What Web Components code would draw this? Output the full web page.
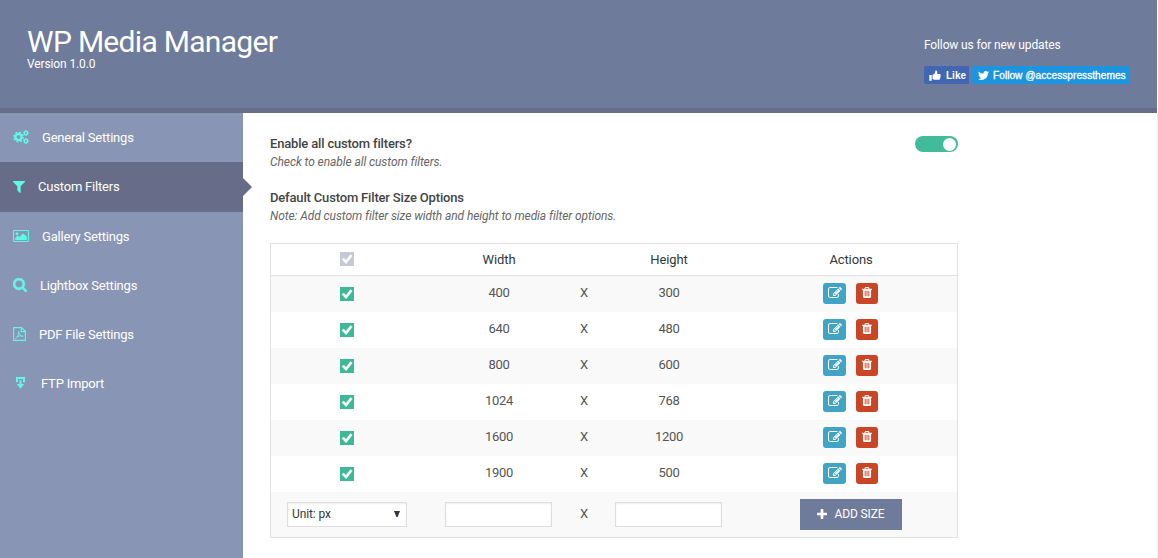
<!DOCTYPE html>
<html lang="en">
<head>
<meta charset="utf-8">
<title>WP Media Manager</title>
<style>
  body {
    margin: 0;
    background: #fff;
    font-family: Roboto, "Liberation Sans", sans-serif;
    font-size: 13px;
    color: #555;
    overflow: hidden;
  }
</style>
</head>
<body>
<media-manager></media-manager>

<script>
const ICONS = {
  gears: { box: '0 0 16 14', body: `
    <g fill="none" stroke="currentColor">
      <circle cx="5.5" cy="7" r="3.1" stroke-width="2.4"/>
      <circle cx="5.5" cy="7" r="4.7" stroke-width="1.5" stroke-dasharray="1.85 1.84"/>
      <circle cx="12.9" cy="3" r="1.7" stroke-width="1.5"/>
      <circle cx="12.9" cy="3" r="2.5" stroke-width="1" stroke-dasharray="1.3 1.31"/>
      <circle cx="12.9" cy="11" r="1.7" stroke-width="1.5"/>
      <circle cx="12.9" cy="11" r="2.5" stroke-width="1" stroke-dasharray="1.3 1.31"/>
    </g>` },
  filter: { box: '192 256 1408 1408', body: '<path d="M1595 295q17 41-14 70l-493 493v742q0 42-39 59-13 5-25 5-27 0-45-19l-256-256q-19-19-19-45v-486l-493-493q-31-29-14-70 17-39 59-39h1280q42 0 59 39z"/>' },
  image: { box: '0 0 16 12', body: `
    <rect x=".55" y=".55" width="14.9" height="10.9" rx=".6" fill="none" stroke="currentColor" stroke-width="1.1"/>
    <circle cx="4" cy="3.8" r="1.5"/>
    <path d="M2.2 9.9V8l2.5-2.4 1.5 1.5 3.9-3.9 3.7 3.5v3.2z"/>` },
  search: { box: '64 128 1664 1664', body: '<path stroke="currentColor" stroke-width="60" d="M1216 832q0-185-131.500-316.500t-316.500-131.500-316.500 131.500-131.500 316.500 131.500 316.500 316.500 131.500 316.500-131.500 131.500-316.500zm512 832q0 52-38 90t-90 38q-54 0-90-38l-343-342q-179 124-399 124-143 0-273.500-55.500t-225-150-150-225-55.500-273.500 55.500-273.500 150-225 225-150 273.500-55.500 273.500 55.500 225 150 150 225 55.500 273.500q0 220-124 399l343 343q37 37 37 90z"/>' },
  pdf: { box: '0 0 13 14', body: `
    <g fill="none" stroke="currentColor" stroke-width="1.1">
      <path d="M.6.6h8l3.8 3.7v9.1H.6zM8.3.6v4h4"/>
      <path d="M2.4 11.6c1.5-.7 3.3-3.600 3.600-6.600.1-1-.7-1-.6 0 .3 2.200 2 4 4.900 4.300M3.700 9.900c1.700-.8 3.900-1.200 6.600-.8" stroke-width=".9"/>
    </g>` },
  ftp: { box: '0 0 15 12', body: '<path d="M3 0h9v5.200h-2V2H5v3.200H3z"/><path d="M6.500 3.200h2v3.700h2.700L7.500 11.700 3.800 6.900h2.700z"/>' },
  edit: { box: '0 0 1792 1792', body: '<path d="M888 1184l116-116-152-152-116 116v56h96v96h56zm440-720q-16-16-33 1l-350 350q-17 17-1 33t33-1l350-350q17-17 1-33zm80 594v190q0 119-84.500 203.500t-203.500 84.500h-832q-119 0-203.500-84.500t-84.500-203.500v-832q0-119 84.500-203.500t203.500-84.500h832q63 0 117 25 15 7 18 23 3 17-9 29l-49 49q-14 14-32 8-23-6-45-6h-832q-66 0-113 47t-47 113v832q0 66 47 113t113 47h832q66 0 113-47t47-113v-126q0-13 9-22l64-64q15-15 35-7t20 29zm-96-738l288 288-672 672h-288v-288zm444 132l-92 92-288-288 92-92q28-28 68-28t68 28l152 152q28 28 28 68t-28 68z"/>' },
  trash: { box: '192 128 1408 1536', body: '<path d="M704 1376v-704q0-14-9-23t-23-9h-64q-14 0-23 9t-9 23v704q0 14 9 23t23 9h64q14 0 23-9t9-23zm256 0v-704q0-14-9-23t-23-9h-64q-14 0-23 9t-9 23v704q0 14 9 23t23 9h64q14 0 23-9t9-23zm256 0v-704q0-14-9-23t-23-9h-64q-14 0-23 9t-9 23v704q0 14 9 23t23 9h64q14 0 23-9t9-23zm-544-992h448l-48-117q-7-9-17-11h-317q-10 2-17 11zm928 32v64q0 14-9 23t-23 9h-96v948q0 83-47 143.500t-113 60.500h-832q-66 0-113-58.500t-47-141.500v-952h-96q-14 0-23-9t-9-23v-64q0-14 9-23t23-9h309l70-167q15-37 54-63t79-26h320q40 0 79 26t54 63l70 167h309q14 0 23 9t9 23z"/>' },
  plus: { box: '192 128 1408 1408', body: '<path d="M1600 736v192q0 40-28 68t-68 28h-416v416q0 40-28 68t-68 28h-192q-40 0-68-28t-28-68v-416h-416q-40 0-68-28t-28-68v-192q0-40 28-68t68-28h416v-416q0-40 28-68t68-28h192q40 0 68 28t28 68v416h416q40 0 68 28t28 68z"/>' },
  check: { box: '0 0 14 14', body: '<path d="M2.700 6.600 6 10 11.500 3.200" fill="none" stroke="currentColor" stroke-width="2.700"/>' },
  twitter: { box: '108 256 1576 1280', body: '<path d="M1684 408q-67 98-162 167 1 14 1 42 0 130-38 259.500t-115.500 248.500-184.500 210.500-258 146-323 54.500q-271 0-496-145 35 4 78 4 225 0 401-138-105-2-188-64.500t-114-159.500q33 5 61 5 43 0 85-11-112-23-185.500-111.500t-73.500-205.500v-4q68 38 146 41-66-44-105-115t-39-154q0-88 44-163 121 149 294.500 238.500t371.500 99.500q-8-38-8-74 0-134 94.500-228.500t228.500-94.500q140 0 236 102 109-21 205-78-37 115-142 178 93-10 186-50z"/>' },
  like: { box: '0 0 12 11', body: '<path d="M.3 5h2.400v5.700H.3zM3.500 5.200 6 3.100 6.500.5c1.500-.3 2.300.9 1.500 3.500h2.700c1 0 1.300 1 .7 1.500.5.500.4 1.200-.2 1.500.4.600.1 1.200-.4 1.400.3.700-.1 1.400-.9 1.400l-4.500-.1-1.900-.6z"/>' },
  arrow: { box: '0 0 6 6', body: '<path d="M0 0h6L3.600 6H2.400z"/>' }
};

class BaseElement extends HTMLElement {
  constructor() {
    super();
    this.attachShadow({ mode: 'open' });
  }

  connectedCallback() {
    this.shadowRoot.innerHTML = this.render();
  }
}

// <fa-icon name="edit" w="14" h="14">
class FaIcon extends BaseElement {
  render() {
    const icon = ICONS[this.getAttribute('name')];
    return `
      <style>
        :host { display: inline-block; flex: none; }
        svg { display: block; fill: currentColor; }
      </style>
      <svg width="${this.getAttribute('w')}" height="${this.getAttribute('h')}" viewBox="${icon.box}" aria-hidden="true">${icon.body}</svg>
    `;
  }
}

class ManagerHeader extends BaseElement {
  render() {
    return `
      <style>
        :host {
          display: flex;
          justify-content: space-between;
          align-items: flex-start;
          box-sizing: border-box;
          height: 113px;
          padding: 24px 27px 0;
          background: #6f7b9b;
          border-bottom: 5px solid #676d88;
          color: #fff;
        }
        h1 {
          margin: 0;
          font-size: 30px;
          font-weight: 400;
          line-height: 36px;
          letter-spacing: -.7px;
        }
        .version { font-size: 12px; line-height: 14px; margin-top: -3px; letter-spacing: -.12px; }
        .follow { padding-top: 14px; }
        .follow p { margin: 0 0 13px; font-size: 12px; line-height: 15px; letter-spacing: -.14px; }
        .social { display: flex; gap: 3px; font-family: "Liberation Sans", sans-serif; }
        .social a {
          display: flex;
          align-items: center;
          box-sizing: border-box;
          height: 18px;
          color: #fff;
          white-space: nowrap;
        }
        .fb { width: 45px; padding-left: 5px; gap: 5px; border-radius: 2px 0 0 2px; background: #4267b2; font-size: 10px; font-weight: 700; }
        .fb span { padding-top: 1px; }
        .tw {
          width: 158px;
          padding-left: 6px;
          gap: 4px;
          border-radius: 2px 0 0 2px;
          background: #1b95e0;
          font-size: 10.200px;
          -webkit-text-stroke: .3px #fff;
        }
      </style>
      <div>
        <h1>WP Media Manager</h1>
        <div class="version">Version 1.0.0</div>
      </div>
      <div class="follow">
        <p>Follow us for new updates</p>
        <div class="social">
          <a class="fb"><fa-icon name="like" w="12" h="11"></fa-icon><span>Like</span></a>
          <a class="tw"><fa-icon name="twitter" w="11" h="9"></fa-icon><span>Follow @accesspressthemes</span></a>
        </div>
      </div>
    `;
  }
}

class NavItem extends BaseElement {
  render() {
    return `
      <style>
        :host {
          display: flex;
          align-items: center;
          gap: 13px;
          box-sizing: border-box;
          height: 49px;
          padding-left: 13px;
          position: relative;
          color: #fff;
          line-height: 16px;
          letter-spacing: -.2px;
        }
        :host([active]) { height: 50px; background: #676d88; }
        :host([active])::after {
          content: "";
          position: absolute;
          left: 100%;
          top: 16px;
          border: 9px solid transparent;
          border-right-width: 0;
          border-left-color: #676d88;
        }
        fa-icon { color: #5ff9e6; margin-bottom: 1px; }
      </style>
      <fa-icon name="${this.getAttribute('icon')}" w="${this.getAttribute('w')}" h="${this.getAttribute('h')}"></fa-icon>
      <slot></slot>
    `;
  }
}

class ManagerNav extends BaseElement {
  render() {
    return `
      <style>
        :host { display: block; width: 243px; flex: none; background: #8995b5; }
      </style>
      <nav-item icon="gears" w="16" h="14">General Settings</nav-item>
      <nav-item icon="filter" w="12" h="12" active>Custom Filters</nav-item>
      <nav-item icon="image" w="16" h="12">Gallery Settings</nav-item>
      <nav-item icon="search" w="14" h="14">Lightbox Settings</nav-item>
      <nav-item icon="pdf" w="13" h="14">PDF File Settings</nav-item>
      <nav-item icon="ftp" w="15" h="12">FTP Import</nav-item>
    `;
  }
}

class ToggleSwitch extends BaseElement {
  render() {
    return `
      <style>
        :host {
          display: flex;
          justify-content: flex-end;
          align-items: center;
          box-sizing: border-box;
          width: 43px;
          height: 16px;
          padding-right: 2px;
          border-radius: 8px;
          background: #41bc9b;
        }
        i { width: 13px; height: 13px; border-radius: 50%; background: #fff; }
      </style>
      <i></i>
    `;
  }
}

class CheckBox extends BaseElement {
  render() {
    return `
      <style>
        :host { display: block; width: 14px; height: 14px; background: #3cb999; color: #fff; }
        :host([muted]) { background: #c5c9d7; }
      </style>
      <fa-icon name="check" w="14" h="14"></fa-icon>
    `;
  }
}

class OptionIntro extends BaseElement {
  render() {
    return `
      <style>
        :host { display: block; }
        h2 { margin: 0; font-size: 13px; line-height: 18px; font-weight: 500; letter-spacing: -.17px; color: #444; }
        p { margin: 0; font-size: 12px; line-height: 18px; font-style: italic; letter-spacing: -.085px; color: #666; }
      </style>
      <h2><slot name="title"></slot></h2>
      <p><slot></slot></p>
    `;
  }
}

class SizeTable extends BaseElement {
  get sizes() {
    return [[400, 300], [640, 480], [800, 600], [1024, 768], [1600, 1200], [1900, 500]];
  }

  renderRow([width, height]) {
    return `
      <div class="row">
        <check-box></check-box>
        <span>${width}</span>
        <span>X</span>
        <span>${height}</span>
        <div class="actions">
          <button class="edit" aria-label="Edit"><fa-icon name="edit" w="14" h="14"></fa-icon></button>
          <button class="delete" aria-label="Delete"><fa-icon name="trash" w="10" h="11"></fa-icon></button>
        </div>
      </div>
    `;
  }

  render() {
    return `
      <style>
        :host { display: block; box-sizing: border-box; width: 688px; border: 1px solid #e1e1e1; }
        .row {
          display: grid;
          grid-template-columns: 152px 152px 18px 152px 212px;
          align-items: center;
          justify-items: center;
          height: 36px;
        }
        .row:nth-child(even of .row) { background: #f9f9f9; }
        .row > span { line-height: 16px; padding-bottom: 2px; letter-spacing: -.3px; }
        .head { height: 31px; border-bottom: 1px solid #e1e1e1; color: #32373c; }
        .head > span { padding: 0; letter-spacing: -.12px; }
        .head check-box { margin-bottom: 1px; }
        .actions { display: flex; gap: 10px; margin: 0 1px 1px 0; }
        button { border: 0; font: inherit; color: #fff; display: flex; justify-content: center; }
        .edit, .delete { height: 21px; padding: 4px 0 0; border-radius: 3px; }
        .edit { width: 23px; background: #41a4c4; padding-top: 3px; }
        .delete { width: 22px; background: #c94526; }
        .foot { height: 45px; }
        .foot > span { padding-bottom: 1px; }
        .unit, input {
          box-sizing: border-box;
          height: 25px;
          border: 1px solid #ddd;
          border-radius: 0;
          background: #fff;
          box-shadow: inset 0 1px 2px rgba(0, 0, 0, .07);
        }
        input { width: 107px; margin: 0 1px 0 0; }
        .unit {
          display: flex;
          align-items: center;
          justify-content: space-between;
          width: 120px;
          padding: 0 6px 1px 4px;
          font-size: 12px;
          letter-spacing: -.1px;
          color: #32373c;
        }
        .add {
          width: 102px;
          height: 31px;
          padding: 0 0 1px;
          gap: 7px;
          align-items: center;
          background: #6f7b9b;
          font-size: 12px;
          letter-spacing: -.1px;
        }
      </style>
      <div class="row head">
        <check-box muted></check-box>
        <span>Width</span>
        <span></span>
        <span>Height</span>
        <span>Actions</span>
      </div>
      ${this.sizes.map((size) => this.renderRow(size)).join('')}
      <div class="row foot">
        <div class="unit"><span>Unit: px</span><fa-icon name="arrow" w="6" h="6"></fa-icon></div>
        <input type="text" aria-label="Width">
        <span>X</span>
        <input type="text" aria-label="Height">
        <button class="add"><fa-icon name="plus" w="10" h="10"></fa-icon><span>ADD SIZE</span></button>
      </div>
    `;
  }
}

class MediaManager extends BaseElement {
  render() {
    return `
      <style>
        :host { display: flex; flex-direction: column; width: 1157px; height: 558px; }
        .body { display: flex; flex: 1; border-right: 1px solid #eee; margin-right: -1px; }
        main { width: 688px; padding: 22px 0 0 27px; }
        .enable { display: flex; justify-content: space-between; align-items: flex-start; margin-bottom: 18px; }
        toggle-switch { margin-top: 1px; }
        size-table { margin-top: 18px; }
      </style>
      <manager-header></manager-header>
      <div class="body">
        <manager-nav></manager-nav>
        <main>
          <div class="enable">
            <option-intro><span slot="title">Enable all custom filters?</span>Check to enable all custom filters.</option-intro>
            <toggle-switch></toggle-switch>
          </div>
          <option-intro><span slot="title">Default Custom Filter Size Options</span>Note: Add custom filter size width and height to media filter options.</option-intro>
          <size-table></size-table>
        </main>
      </div>
    `;
  }
}

customElements.define('fa-icon', FaIcon);
customElements.define('manager-header', ManagerHeader);
customElements.define('nav-item', NavItem);
customElements.define('manager-nav', ManagerNav);
customElements.define('toggle-switch', ToggleSwitch);
customElements.define('check-box', CheckBox);
customElements.define('option-intro', OptionIntro);
customElements.define('size-table', SizeTable);
customElements.define('media-manager', MediaManager);
</script>
</body>
</html>
